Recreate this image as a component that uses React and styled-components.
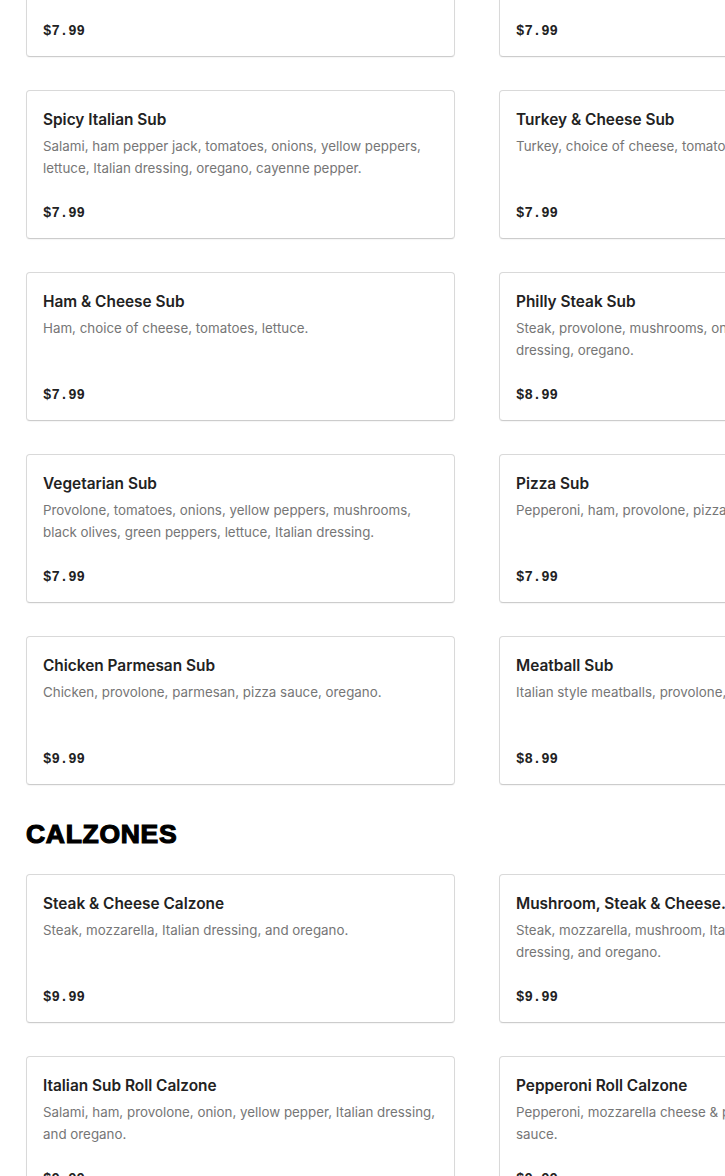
import styled, { createGlobalStyle } from 'styled-components';

const GlobalStyle = createGlobalStyle`
  html, body {
    margin: 0;
    padding: 0;
    overflow: hidden;
    background: #ffffff;
  }
  body {
    font-family: Inter, "Liberation Sans", sans-serif;
    color: #222222;
  }
`;

const subs = [
  { name: 'Italian Sub', desc: 'Salami, ham, provolone, tomatoes, onions, lettuce, Italian dressing.', price: '$7.99' },
  { name: 'Ham & Salami Sub', desc: 'Ham, salami, provolone, tomatoes, lettuce.', price: '$7.99' },
  { name: 'Spicy Italian Sub', desc: 'Salami, ham pepper jack, tomatoes, onions, yellow peppers, lettuce, Italian dressing, oregano, cayenne pepper.', price: '$7.99' },
  { name: 'Turkey & Cheese Sub', desc: 'Turkey, choice of cheese, tomatoes, lettuce.', price: '$7.99' },
  { name: 'Ham & Cheese Sub', desc: 'Ham, choice of cheese, tomatoes, lettuce.', price: '$7.99' },
  { name: 'Philly Steak Sub', desc: 'Steak, provolone, mushrooms, onions, green peppers, Italian dressing, oregano.', price: '$8.99' },
  { name: 'Vegetarian Sub', desc: 'Provolone, tomatoes, onions, yellow peppers, mushrooms, black olives, green peppers, lettuce, Italian dressing.', price: '$7.99' },
  { name: 'Pizza Sub', desc: 'Pepperoni, ham, provolone, pizza sauce, oregano.', price: '$7.99' },
  { name: 'Chicken Parmesan Sub', desc: 'Chicken, provolone, parmesan, pizza sauce, oregano.', price: '$9.99' },
  { name: 'Meatball Sub', desc: 'Italian style meatballs, provolone, pizza sauce.', price: '$8.99' },
];

const calzones = [
  { name: 'Steak & Cheese Calzone', desc: 'Steak, mozzarella, Italian dressing, and oregano.', price: '$9.99' },
  { name: 'Mushroom, Steak & Cheese.', desc: 'Steak, mozzarella, mushroom, Italian sausage, onion, Italian dressing, and oregano.', price: '$9.99' },
  { name: 'Italian Sub Roll Calzone', desc: 'Salami, ham, provolone, onion, yellow pepper, Italian dressing, and oregano.', price: '$9.99' },
  { name: 'Pepperoni Roll Calzone', desc: 'Pepperoni, mozzarella cheese & pepperoni rolls with pizza sauce.', price: '$9.99' },
];

export default function App() {
  return (
    <>
      <GlobalStyle />
      <Page>
        <Grid>
          {subs.map((item) => (
            <MenuCard key={item.name} item={item} />
          ))}
        </Grid>
        <SectionTitle>CALZONES</SectionTitle>
        <Grid>
          {calzones.map((item) => (
            <MenuCard key={item.name} item={item} />
          ))}
        </Grid>
      </Page>
    </>
  );
}

function MenuCard({ item }) {
  return (
    <Card>
      <Name>{item.name}</Name>
      <Desc>{item.desc}</Desc>
      <Price>{item.price}</Price>
    </Card>
  );
}

const Page = styled.main`
  display: flex;
  flex-direction: column;
  margin-top: -92px;
  padding-left: 26px;
  width: 902px;
`;

const Grid = styled.section`
  display: grid;
  grid-template-columns: 429px 429px;
  column-gap: 44px;
  row-gap: 33px;
`;

const Card = styled.article`
  box-sizing: border-box;
  display: flex;
  flex-direction: column;
  height: 149px;
  padding: 19px 16px 15px;
  border: 1px solid #d9d9d9;
  border-bottom-color: #cccccc;
  border-radius: 4px;
  box-shadow: 0 1px 1px rgba(0, 0, 0, 0.04);
  background: #ffffff;
`;

const Name = styled.h3`
  margin: 0;
  font-size: 15.4px;
  line-height: 20px;
  font-weight: 600;
  color: #222222;
  white-space: nowrap;
`;

const Desc = styled.p`
  margin: 5px 0 0;
  font-size: 13.35px;
  line-height: 22px;
  color: #767676;
`;

const Price = styled.span`
  margin-top: auto;
  font-family: "Liberation Mono", "DejaVu Sans Mono", monospace;
  font-weight: 700;
  font-size: 14px;
  line-height: 20px;
  color: #222222;
`;

const SectionTitle = styled.h2`
  margin: 34px 0 25px;
  font-family: "Liberation Sans", Arial, sans-serif;
  font-weight: 700;
  font-size: 26.5px;
  line-height: 30px;
  letter-spacing: 0.7px;
  color: #000000;
  -webkit-text-stroke: 1.2px #000000;
`;
